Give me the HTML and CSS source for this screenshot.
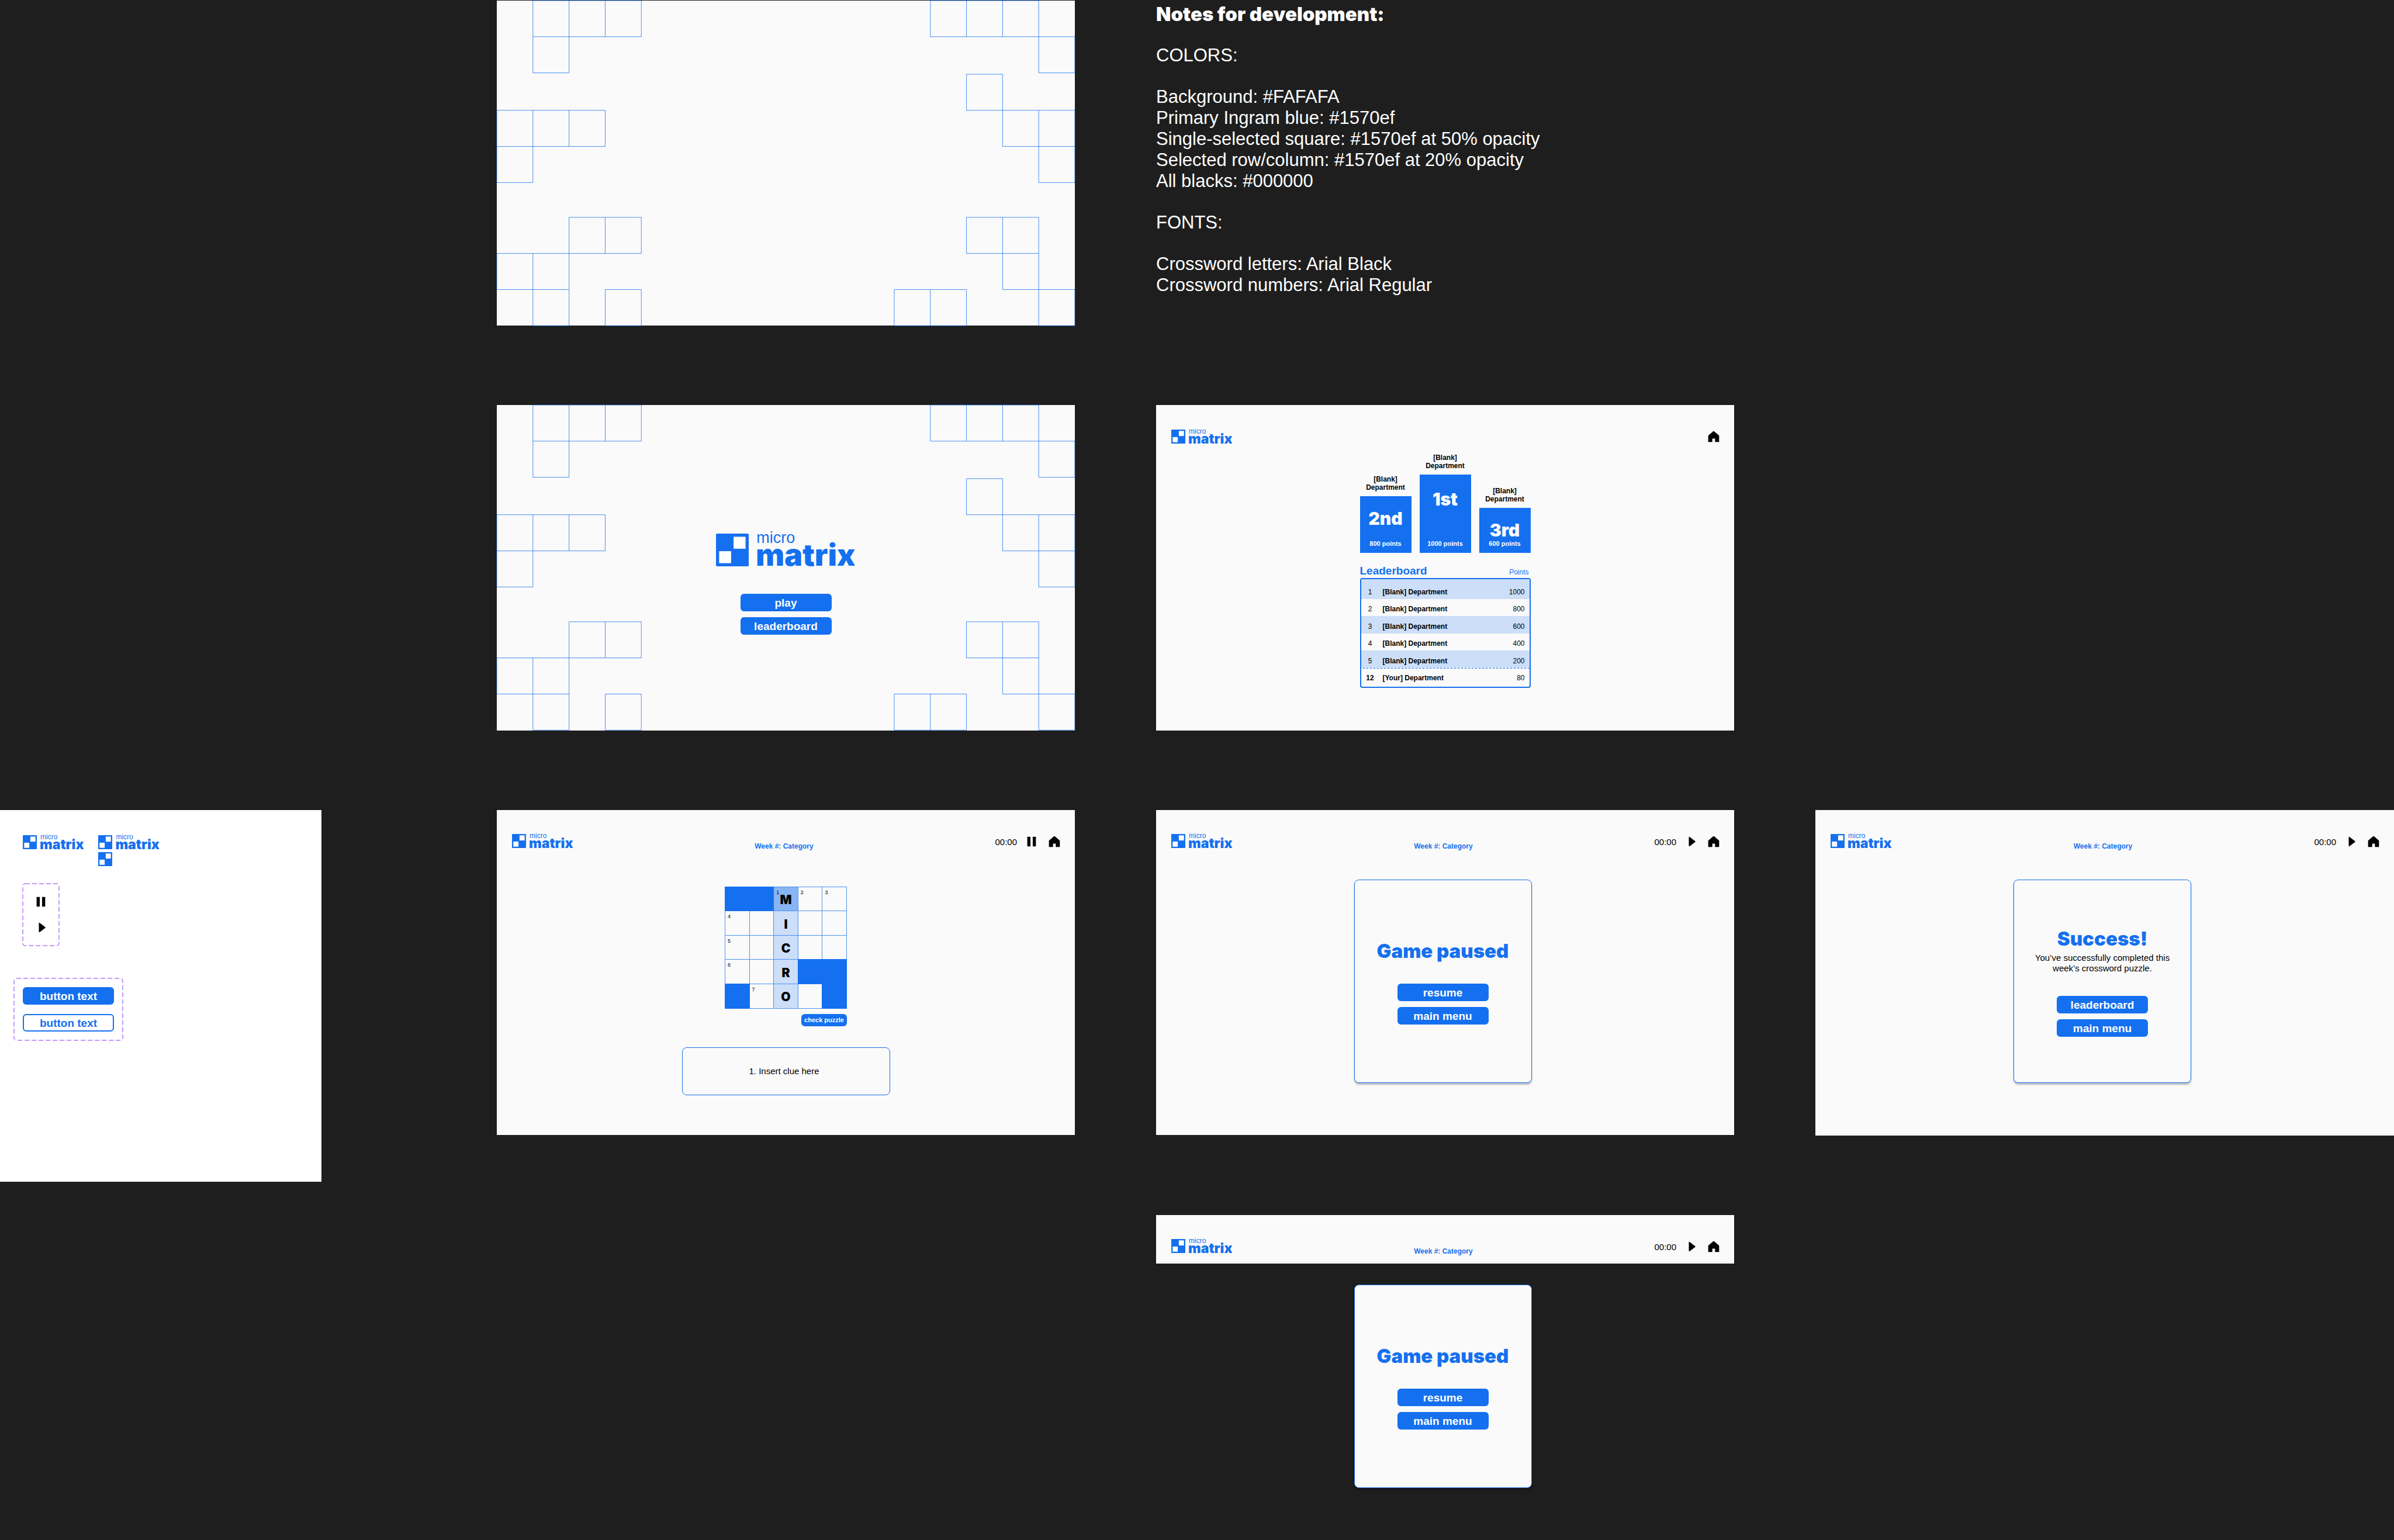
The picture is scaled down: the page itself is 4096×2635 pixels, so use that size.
FILE: index.html
```html
<!DOCTYPE html>
<html lang="en">
<head>
<meta charset="utf-8">
<meta name="viewport" content="width=device-width, initial-scale=1">
<title>Micro Matrix screens</title>
<link rel="stylesheet" href="styles.css">
</head>
<body>
<svg class="sprite" aria-hidden="true">
  <symbol id="mark" viewBox="0 0 93 93">
    <rect width="93" height="93" rx="3" fill="#1570ef"/>
    <rect x="50" y="9" width="34" height="34" fill="#fff"/>
    <rect x="9" y="50" width="34" height="34" fill="#fff"/>
  </symbol>
  <symbol id="icon-pause" viewBox="0 0 24 24">
    <rect x="5.7" y="5" width="4.6" height="14" rx=".4"/>
    <rect x="13.7" y="5" width="4.6" height="14" rx=".4"/>
  </symbol>
  <symbol id="icon-play" viewBox="0 0 24 24">
    <path d="M9 5.7v12.6c0 .6.7.9 1.1.5l8.2-6.1c.5-.4.5-1 0-1.400l-8.200-6.100C9.700 4.800 9 5.100 9 5.700z"/>
  </symbol>
  <symbol id="icon-home" viewBox="0 0 24 24">
    <path d="M11.300 4.300 4.300 10.200a.8.8 0 0 0-.3.6v8.600c0 .3.300.6.6.6H10v-5h4v5h5.400c.3 0 .6-.3.600-.6v-8.600a.8.8 0 0 0-.3-.6l-7-5.900a1.100 1.100 0 0 0-1.400 0z"/>
  </symbol>
  <symbol id="pattern" viewBox="0 0 1280 720" overflow="visible">
    <path fill="none" stroke="#1570ef" stroke-width="1" d="
      M80 0h240v80h-240zM160 0v80M240 0v80M80 80v80h80v-80
      M960 0h240v80h-240zM1040 0v80M1120 0v80M1200 80h80v80h-80v-80
      M1040 163h80v80h-80zM1120 243h160v80h-160zM1200 243v160h80v-80
      M0 243h240v80h-240zM80 243v160h-80v-80M160 243v80
      M160 480h160v80h-160zM240 480v80M0 560h160v80h-160zM80 560v160h80v-80M240 640h80v80h-80z
      M1040 480h160v80h-160zM1120 480v160h80v-80M1200 640h80v80h-80zM880 640h160v80h-160zM960 640v80"/>
  </symbol>
</svg>

<main class="canvas">
  <section class="screen screen--backdrop">
    <svg class="pattern" aria-hidden="true"><use href="#pattern"/></svg>
  </section>

  <article class="notes">
    <h1 class="notes__title">Notes for development:</h1>
    <h2 class="notes__heading">COLORS:</h2>
    <ul class="notes__list">
      <li>Background: #FAFAFA</li>
      <li>Primary Ingram blue: #1570ef</li>
      <li>Single-selected square: #1570ef at 50% opacity</li>
      <li>Selected row/column: #1570ef at 20% opacity</li>
      <li>All blacks: #000000</li>
    </ul>
    <h2 class="notes__heading">FONTS:</h2>
    <ul class="notes__list">
      <li>Crossword letters: Arial Black</li>
      <li>Crossword numbers: Arial Regular</li>
    </ul>
  </article>

  <section class="screen screen--start">
    <svg class="pattern" aria-hidden="true"><use href="#pattern"/></svg>
    <div class="start">
      <div class="logo logo--large">
        <svg class="logo__mark" aria-hidden="true"><use href="#mark"/></svg>
        <div class="logo__text"><span class="logo__micro">micro</span><span class="logo__matrix">matrix</span></div>
      </div>
      <div class="actions">
        <button class="button" type="button">play</button>
        <button class="button" type="button">leaderboard</button>
      </div>
    </div>
  </section>

  <section class="screen screen--ranking">
    <header class="topbar">
      <div class="logo">
        <svg class="logo__mark" aria-hidden="true"><use href="#mark"/></svg>
        <div class="logo__text"><span class="logo__micro">micro</span><span class="logo__matrix">matrix</span></div>
      </div>
      <nav class="topbar__tools">
        <a class="tool" href="#home" aria-label="Home"><svg class="icon"><use href="#icon-home"/></svg></a>
      </nav>
    </header>
    <div class="ranking">
      <ol class="podium">
        <li class="podium__place">
          <span class="podium__name">[Blank]<br>Department</span>
          <div class="podium__block podium__block--second"><span class="podium__rank">2nd</span><span class="podium__points">800 points</span></div>
        </li>
        <li class="podium__place">
          <span class="podium__name">[Blank]<br>Department</span>
          <div class="podium__block podium__block--first"><span class="podium__rank">1st</span><span class="podium__points">1000 points</span></div>
        </li>
        <li class="podium__place">
          <span class="podium__name">[Blank]<br>Department</span>
          <div class="podium__block podium__block--third"><span class="podium__rank">3rd</span><span class="podium__points">600 points</span></div>
        </li>
      </ol>
      <div class="ranking__head">
        <h2 class="ranking__title">Leaderboard</h2>
        <span class="ranking__unit">Points</span>
      </div>
      <div class="ranking__box">
        <table class="scores">
          <tbody>
            <tr><td>1</td><th scope="row">[Blank] Department</th><td>1000</td></tr>
            <tr><td>2</td><th scope="row">[Blank] Department</th><td>800</td></tr>
            <tr><td>3</td><th scope="row">[Blank] Department</th><td>600</td></tr>
            <tr><td>4</td><th scope="row">[Blank] Department</th><td>400</td></tr>
            <tr><td>5</td><th scope="row">[Blank] Department</th><td>200</td></tr>
            <tr class="scores__own"><td>12</td><th scope="row">[Your] Department</th><td>80</td></tr>
          </tbody>
        </table>
      </div>
    </div>
  </section>

  <section class="parts">
    <div class="parts__logos">
      <div class="logo">
        <svg class="logo__mark" aria-hidden="true"><use href="#mark"/></svg>
        <div class="logo__text"><span class="logo__micro">micro</span><span class="logo__matrix">matrix</span></div>
      </div>
      <div class="parts__stack">
        <div class="logo">
          <svg class="logo__mark" aria-hidden="true"><use href="#mark"/></svg>
          <div class="logo__text"><span class="logo__micro">micro</span><span class="logo__matrix">matrix</span></div>
        </div>
        <svg class="logo__mark" aria-hidden="true"><use href="#mark"/></svg>
      </div>
    </div>
    <div class="variants variants--icons">
      <svg class="variants__frame" aria-hidden="true"><rect width="100%" height="100%" rx="4"/></svg>
      <button class="tool" type="button" aria-label="Pause"><svg class="icon"><use href="#icon-pause"/></svg></button>
      <button class="tool" type="button" aria-label="Play"><svg class="icon"><use href="#icon-play"/></svg></button>
    </div>
    <div class="variants">
      <svg class="variants__frame" aria-hidden="true"><rect width="100%" height="100%" rx="4"/></svg>
      <button class="button" type="button">button text</button>
      <button class="button button--outline" type="button">button text</button>
    </div>
  </section>

  <section class="screen screen--game">
    <header class="topbar">
      <div class="logo">
        <svg class="logo__mark" aria-hidden="true"><use href="#mark"/></svg>
        <div class="logo__text"><span class="logo__micro">micro</span><span class="logo__matrix">matrix</span></div>
      </div>
      <h2 class="topbar__title">Week #: Category</h2>
      <div class="topbar__tools">
        <time class="timer">00:00</time>
        <button class="tool" type="button" aria-label="Pause"><svg class="icon"><use href="#icon-pause"/></svg></button>
        <a class="tool" href="#home" aria-label="Home"><svg class="icon"><use href="#icon-home"/></svg></a>
      </div>
    </header>
    <div class="game">
      <div class="puzzle">
        <div class="crossword">
          <div class="cell cell--block"></div>
          <div class="cell cell--block"></div>
          <label class="cell cell--selected"><span class="cell__number">1</span><input class="cell__input" maxlength="1" value="M"></label>
          <label class="cell"><span class="cell__number">2</span><input class="cell__input" maxlength="1"></label>
          <label class="cell"><span class="cell__number">3</span><input class="cell__input" maxlength="1"></label>

          <label class="cell"><span class="cell__number">4</span><input class="cell__input" maxlength="1"></label>
          <label class="cell"><input class="cell__input" maxlength="1"></label>
          <label class="cell cell--run"><input class="cell__input" maxlength="1" value="I"></label>
          <label class="cell"><input class="cell__input" maxlength="1"></label>
          <label class="cell"><input class="cell__input" maxlength="1"></label>

          <label class="cell"><span class="cell__number">5</span><input class="cell__input" maxlength="1"></label>
          <label class="cell"><input class="cell__input" maxlength="1"></label>
          <label class="cell cell--run"><input class="cell__input" maxlength="1" value="C"></label>
          <label class="cell"><input class="cell__input" maxlength="1"></label>
          <label class="cell"><input class="cell__input" maxlength="1"></label>

          <label class="cell"><span class="cell__number">6</span><input class="cell__input" maxlength="1"></label>
          <label class="cell"><input class="cell__input" maxlength="1"></label>
          <label class="cell cell--run"><input class="cell__input" maxlength="1" value="R"></label>
          <div class="cell cell--block"></div>
          <div class="cell cell--block"></div>

          <div class="cell cell--block"></div>
          <label class="cell"><span class="cell__number">7</span><input class="cell__input" maxlength="1"></label>
          <label class="cell cell--run"><input class="cell__input" maxlength="1" value="O"></label>
          <label class="cell"><input class="cell__input" maxlength="1"></label>
          <div class="cell cell--block"></div>
        </div>
        <button class="button button--small" type="button">check puzzle</button>
      </div>
      <p class="clue">1. Insert clue here</p>
    </div>
  </section>

  <section class="screen screen--paused">
    <header class="topbar">
      <div class="logo">
        <svg class="logo__mark" aria-hidden="true"><use href="#mark"/></svg>
        <div class="logo__text"><span class="logo__micro">micro</span><span class="logo__matrix">matrix</span></div>
      </div>
      <h2 class="topbar__title">Week #: Category</h2>
      <div class="topbar__tools">
        <time class="timer">00:00</time>
        <button class="tool" type="button" aria-label="Play"><svg class="icon"><use href="#icon-play"/></svg></button>
        <a class="tool" href="#home" aria-label="Home"><svg class="icon"><use href="#icon-home"/></svg></a>
      </div>
    </header>
    <div class="stage">
      <div class="dialog">
        <h3 class="dialog__title">Game paused</h3>
        <div class="actions">
          <button class="button" type="button">resume</button>
          <button class="button" type="button">main menu</button>
        </div>
      </div>
    </div>
  </section>

  <section class="screen screen--success">
    <header class="topbar">
      <div class="logo">
        <svg class="logo__mark" aria-hidden="true"><use href="#mark"/></svg>
        <div class="logo__text"><span class="logo__micro">micro</span><span class="logo__matrix">matrix</span></div>
      </div>
      <h2 class="topbar__title">Week #: Category</h2>
      <div class="topbar__tools">
        <time class="timer">00:00</time>
        <button class="tool" type="button" aria-label="Play"><svg class="icon"><use href="#icon-play"/></svg></button>
        <a class="tool" href="#home" aria-label="Home"><svg class="icon"><use href="#icon-home"/></svg></a>
      </div>
    </header>
    <div class="stage">
      <div class="dialog">
        <h3 class="dialog__title">Success!</h3>
        <p class="dialog__text">You’ve successfully completed this<br>week’s crossword puzzle.</p>
        <div class="actions">
          <button class="button" type="button">leaderboard</button>
          <button class="button" type="button">main menu</button>
        </div>
      </div>
    </div>
  </section>

  <section class="screen screen--bare">
    <header class="topbar">
      <div class="logo">
        <svg class="logo__mark" aria-hidden="true"><use href="#mark"/></svg>
        <div class="logo__text"><span class="logo__micro">micro</span><span class="logo__matrix">matrix</span></div>
      </div>
      <h2 class="topbar__title">Week #: Category</h2>
      <div class="topbar__tools">
        <time class="timer">00:00</time>
        <button class="tool" type="button" aria-label="Play"><svg class="icon"><use href="#icon-play"/></svg></button>
        <a class="tool" href="#home" aria-label="Home"><svg class="icon"><use href="#icon-home"/></svg></a>
      </div>
    </header>
    <div class="stage">
      <div class="dialog">
        <h3 class="dialog__title">Game paused</h3>
        <div class="actions">
          <button class="button" type="button">resume</button>
          <button class="button" type="button">main menu</button>
        </div>
      </div>
    </div>
  </section>
</main>
</body>
</html>
```
FILE: styles.css
```css
:root {
  --blue: #1570ef;
  --blue-line: #4e92f2;
  --blue-50: #88b5f5;
  --blue-20: #ccdef8;
  --paper: #fafafa;
  --text: Arial, "Liberation Sans", sans-serif;
  --black: Inter, "Arial Black", sans-serif;
}

* { box-sizing: border-box; }

body {
  margin: 0;
  background: #1e1e1e;
  color: #000;
  font-family: var(--text);
  font-size: 15px;
}

h1, h2, h3, p, ul, ol { margin: 0; padding: 0; }
ul, ol { list-style: none; }

.sprite { position: absolute; width: 0; height: 0; }

/* Board of screens */
.canvas {
  display: grid;
  grid-template-columns: 711fr 989fr 989fr 990fr;
  gap: 136px 139px;
  min-height: 100vh;
  align-content: start;
  align-items: start;
  padding-top: 1px;
}

.screen {
  position: relative;
  aspect-ratio: 16 / 9;
  background: var(--paper);
}

.screen--backdrop { grid-area: 1 / 2; }
.notes { grid-area: 1 / 3; }
.screen--start { grid-area: 2 / 2; }
.screen--ranking { grid-area: 2 / 3; }
.parts { grid-area: 3 / 1 / span 2; }
.screen--game { grid-area: 3 / 2; }
.screen--paused { grid-area: 3 / 3; }
.screen--success { grid-area: 3 / 4; }
.screen--bare { grid-area: 4 / 3; aspect-ratio: auto; background: none; }

.pattern {
  position: absolute;
  inset: 0;
  width: 100%;
  height: 100%;
  overflow: visible;
}

/* Notes */
.notes {
  display: flex;
  flex-direction: column;
  gap: 35px;
  padding-top: 5px;
  color: #fff;
  font-size: 31px;
  line-height: 36px;
}
.notes__title { font: 900 33px/36px var(--black); }
.notes__heading { font: inherit; }

/* Logo */
.logo { display: flex; gap: 5px; color: var(--blue); }
.logo__mark { display: block; flex: none; width: 24px; height: 24px; }
.logo__text { display: flex; flex-direction: column; }
.logo__micro { padding-left: 1px; font-size: 12px; line-height: 7px; }
.logo__matrix { font: 900 23px/18px var(--black); }
.logo--large { gap: 12px; }
.logo--large .logo__mark { width: 56px; height: 56px; }
.logo--large .logo__micro { font-size: 27px; line-height: 14px; }
.logo--large .logo__matrix { font-size: 52px; line-height: 46px; }

/* Buttons */
.button {
  width: 156px;
  height: 30px;
  padding: 2px 0 0;
  border: 0;
  border-radius: 6px;
  background: var(--blue);
  color: #fff;
  font: bold 19px/22px var(--text);
}
.button--outline {
  border: 2px solid var(--blue);
  background: #fff;
  color: var(--blue);
}
.button--small {
  width: 78px;
  height: 21px;
  padding: 0;
  font-size: 11px;
  line-height: 20px;
}
.actions { display: flex; flex-direction: column; gap: 10px; }

.tool { display: block; padding: 0; border: 0; background: none; color: #000; }
.icon { display: block; width: 28px; height: 28px; fill: #000; }

/* Start */
.start {
  position: relative;
  display: flex;
  flex-direction: column;
  align-items: center;
  gap: 43px;
  padding-top: 220px;
}

/* Top bar */
.topbar {
  display: flex;
  justify-content: space-between;
  align-items: center;
  padding: 40px 21px 0 26px;
}
.topbar__title {
  align-self: flex-end;
  color: var(--blue);
  font: bold 12px/12px var(--text);
}
.topbar__tools { display: flex; align-items: center; gap: 11px; }
.timer { padding-top: 3px; font-size: 15px; line-height: 18px; }
.screen--bare .topbar { padding-bottom: 15px; background: var(--paper); }

/* Leaderboard */
.ranking { width: 292px; margin: 15px auto 0; }
.podium {
  display: grid;
  grid-template-columns: repeat(3, 1fr);
  gap: 14px;
  align-items: end;
}
.podium__place { display: flex; flex-direction: column; gap: 8px; text-align: center; }
.podium__name { font: bold 12px/14px var(--text); }
.podium__block {
  display: flex;
  flex-direction: column;
  justify-content: space-between;
  padding: 23px 0 9px;
  background: var(--blue);
  color: #fff;
}
.podium__block--first { height: 134px; padding-top: 27px; }
.podium__block--second { height: 97px; }
.podium__block--third { height: 77px; }
.podium__rank { font: 900 30px/30px var(--black); }
.podium__points { font: bold 11px/14px var(--text); }

.ranking__head {
  display: flex;
  justify-content: space-between;
  align-items: baseline;
  margin: 20px 0 1px;
  padding-right: 3px;
  color: var(--blue);
}
.ranking__title { font: bold 19px/22px var(--text); }
.ranking__unit { font-size: 12px; line-height: 16px; }
.ranking__box {
  overflow: hidden;
  border: 2px solid var(--blue);
  border-radius: 4px;
}
.scores {
  width: 100%;
  border-spacing: 0;
  font-size: 12px;
  line-height: 16px;
}
.scores td, .scores th { padding: 0 0 4px; vertical-align: bottom; }
.scores th { padding-left: 6px; text-align: left; }
.scores td:first-child { width: 31px; text-align: center; }
.scores td:last-child { padding-right: 8px; text-align: right; }
.scores tr { height: 29px; }
.scores tr:nth-child(odd) { height: 30px; background: var(--blue-20); }
.scores tr:first-child { height: 34px; }
.scores .scores__own {
  height: 32px;
  background: repeating-linear-gradient(90deg, transparent 0 3px, var(--blue) 3px 6px) top / 100% 1px no-repeat;
}
.scores__own td, .scores__own th { padding-bottom: 7px; }
.scores__own td:first-child { font-weight: bold; }

/* Component sheet */
.parts {
  display: flex;
  flex-direction: column;
  align-items: flex-start;
  width: 77.400%;
  min-height: 636px;
  padding: 43px 24px;
  background: #fff;
}
.parts__logos { display: flex; align-items: flex-start; gap: 25px; margin: 0 0 30px 15px; }
.parts__stack { display: flex; flex-direction: column; gap: 4px; }
.variants {
  position: relative;
  display: flex;
  flex-direction: column;
  gap: 16px;
  padding: 15px;
}
.variants--icons { margin: 0 0 56px 15px; padding: 17px; }
.variants__frame {
  position: absolute;
  inset: 0;
  width: 100%;
  height: 100%;
  overflow: visible;
  fill: none;
  stroke: #8a38f5;
  stroke-width: 1px;
  stroke-dasharray: 8 4;
}

/* Game */
.game {
  display: flex;
  flex-direction: column;
  align-items: center;
  gap: 36px;
  padding-top: 63px;
}
.puzzle { display: flex; flex-direction: column; align-items: flex-end; gap: 9px; }
.crossword {
  display: grid;
  grid-template: repeat(5, 1fr) / repeat(5, 1fr);
  gap: 1px;
  width: 209px;
  height: 209px;
  padding: 1px;
  background: var(--blue-line);
}
.cell { position: relative; display: block; min-height: 0; background: var(--paper); }
.cell--block { background: var(--blue); box-shadow: 0 0 0 1px var(--blue); }
.cell--run { background: var(--blue-20); }
.cell--selected { background: var(--blue-50); }
.cell__number {
  position: absolute;
  top: 3px;
  left: 4px;
  font-size: 9px;
  line-height: 12px;
}
.cell__input {
  display: block;
  width: 100%;
  height: 100%;
  padding: 3px 0 0;
  border: 0;
  outline: 0;
  background: none;
  color: #000;
  font: 900 21px/24px var(--black);
  text-align: center;
}
.clue {
  display: flex;
  justify-content: center;
  align-items: center;
  width: 356px;
  height: 82px;
  padding-right: 6px;
  border: 1px solid var(--blue);
  border-radius: 8px;
  font-size: 15px;
  line-height: 18px;
}

/* Dialogs */
.stage { display: flex; justify-content: center; padding: 51px 8px 0 0; }
.screen--bare .stage { padding-top: 36px; }
.dialog {
  display: flex;
  flex-direction: column;
  justify-content: center;
  align-items: center;
  width: 304px;
  height: 348px;
  padding-top: 5px;
  border: 1px solid var(--blue);
  border-radius: 8px;
  background: var(--paper);
  box-shadow: 0 3px 3px rgba(0, 0, 0, .25);
  text-align: center;
}
.dialog__title { color: var(--blue); font: 900 33px/36px var(--black); }
.dialog__text { margin-top: 6px; font-size: 15px; line-height: 18px; }
.dialog .actions { margin-top: 38px; }
```
